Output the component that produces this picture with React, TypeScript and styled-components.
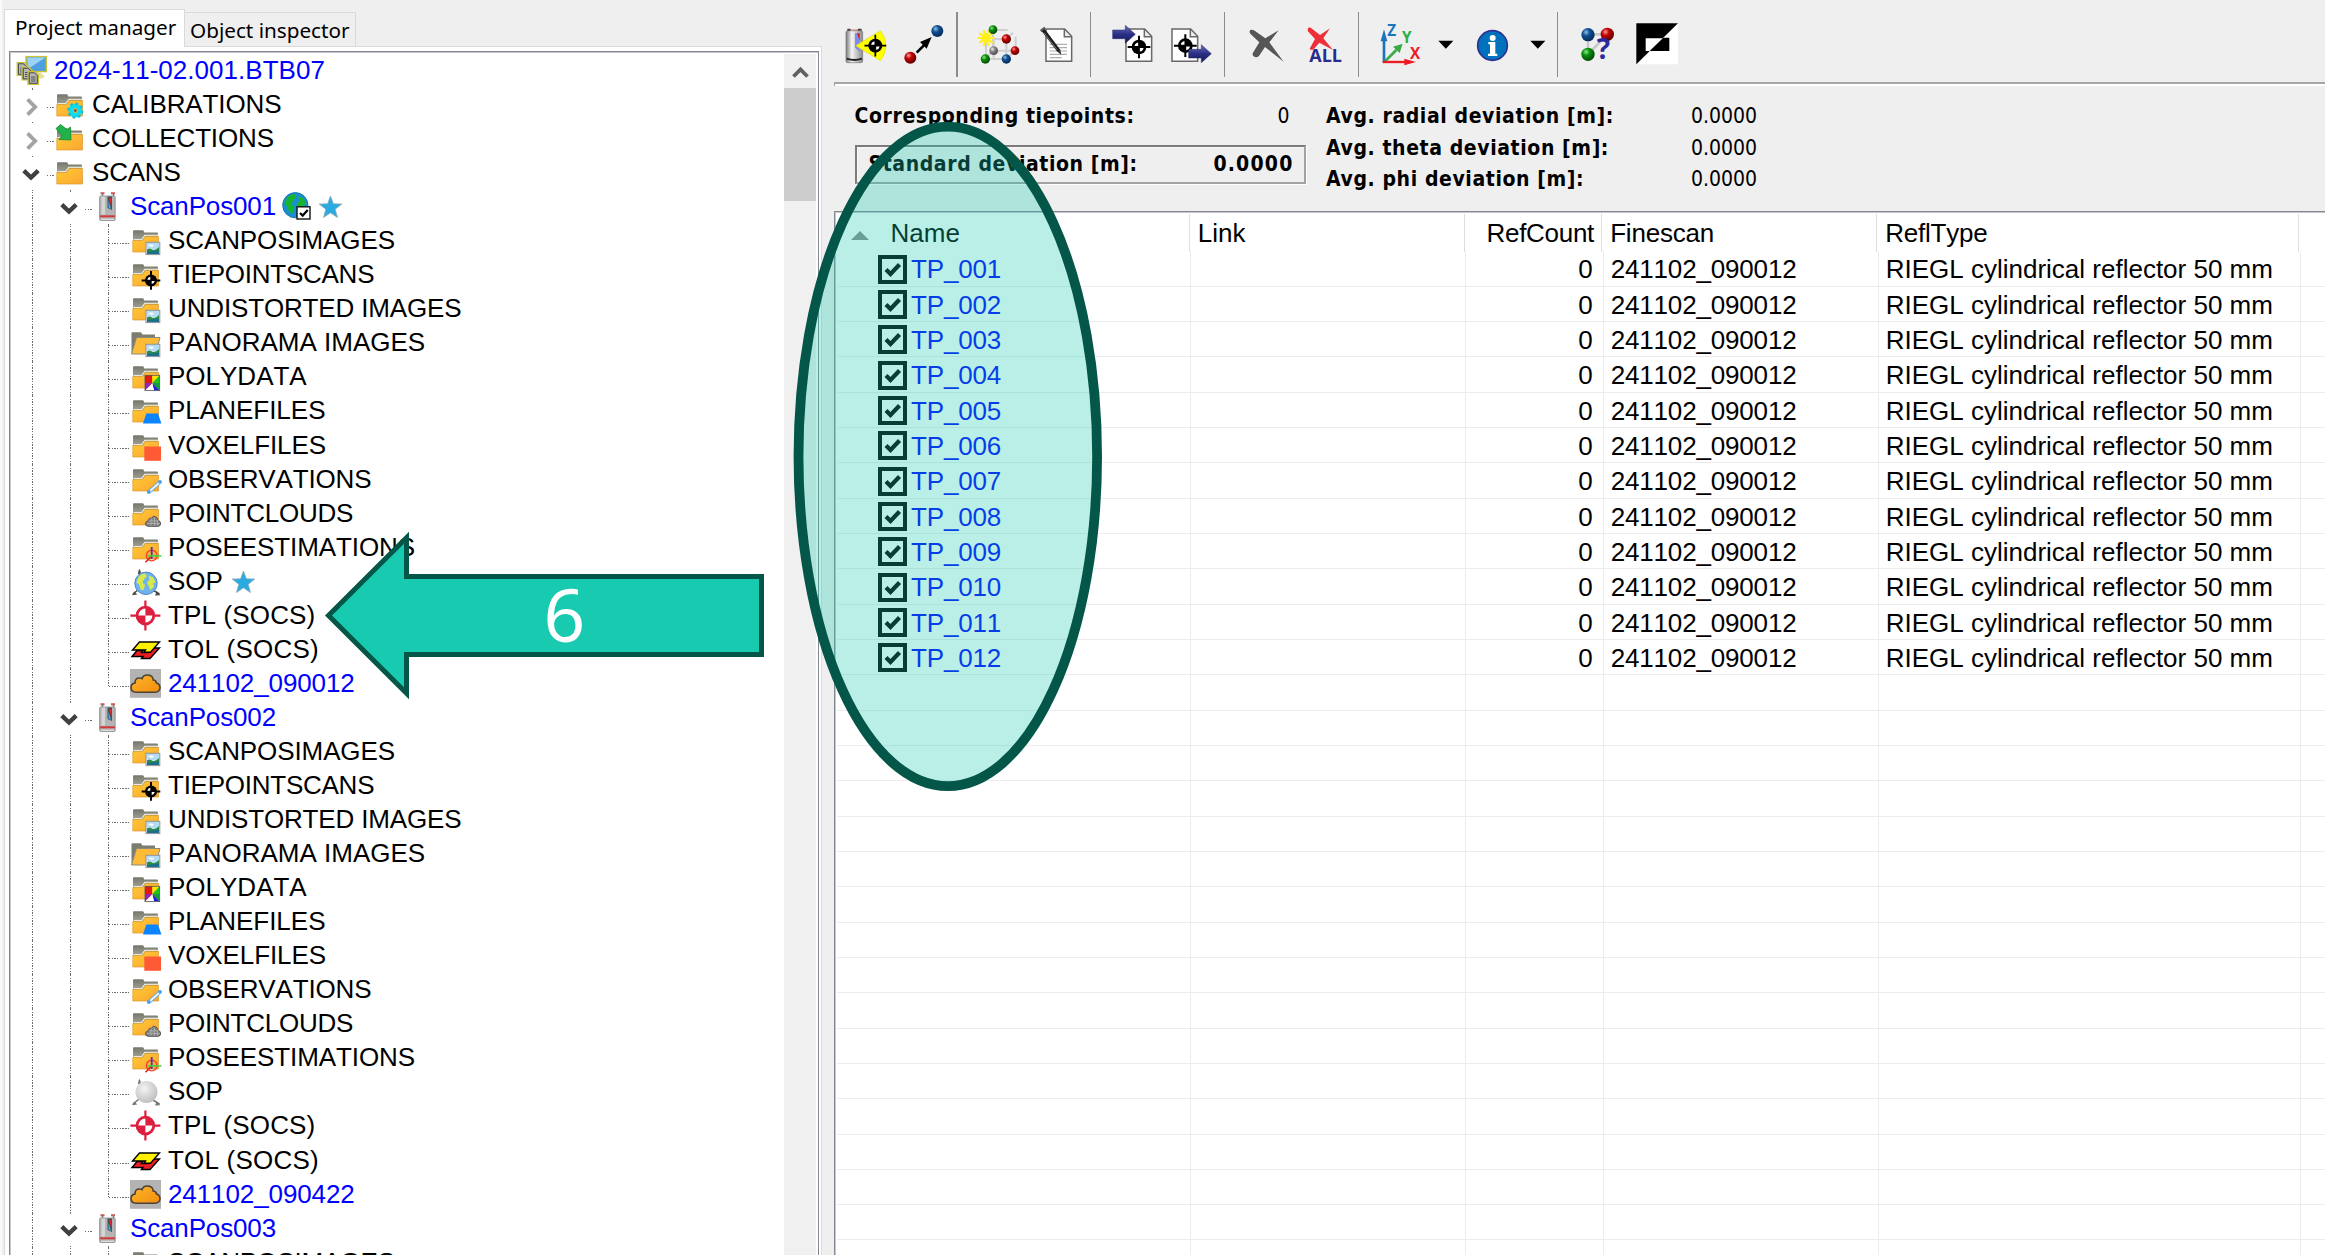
import React from "react";
import styled, { createGlobalStyle, css } from "styled-components";

const GlobalStyle = createGlobalStyle`
  * { box-sizing: border-box; }
  body { margin: 0; background: #fff; overflow: hidden; }
  svg { display: block; overflow: visible; flex: none; }
`;

const arial = css`
  font-family: "Liberation Sans", Arial, sans-serif;
  font-size: 26px;
  font-kerning: none;
  font-variant-ligatures: none;
  white-space: nowrap;
`;

/* ---------- window ---------- */

const Window = styled.div`
  position: relative;
  display: grid;
  grid-template-columns: 822px minmax(0, 1fr);
  height: 1255px;
  background: #efefef;
  overflow: hidden;
  color: #000;
`;

const LeftPane = styled.div`
  display: flex;
  flex-direction: column;
  min-height: 0;
  border-left: 2px solid #fafafa;
  padding-left: 2px;
`;

const TabBar = styled.div`
  display: flex;
  align-items: flex-end;
  height: 47px;
  flex: none;
  position: relative;
  z-index: 1;
`;

const Tab = styled.div<{ $active?: boolean }>`
  height: ${(p) => (p.$active ? 38 : 34)}px;
  width: ${(p) => (p.$active ? 181 : 171)}px;
  margin-bottom: ${(p) => (p.$active ? 0 : 1)}px;
  padding-left: ${(p) => (p.$active ? 10 : 5)}px;
  border: 1px solid #dadada;
  border-bottom: none;
  border-left-width: ${(p) => (p.$active ? 1 : 0)}px;
  background: ${(p) => (p.$active ? "#fff" : "#efefef")};
  font: 20.7px/35px "Noto Sans", "DejaVu Sans Condensed", sans-serif;
  white-space: nowrap;
`;

const TabPage = styled.div`
  flex: 1;
  min-height: 0;
  margin-top: -1px;
  border: 1px solid #dadada;
  border-bottom: none;
  background: #fff;
  padding: 4px 2px 0 4px;
  display: flex;
`;

const TreeFrame = styled.div`
  flex: 1;
  min-width: 0;
  display: flex;
  border: 1px solid #828790;
  border-bottom: none;
  box-shadow: inset 1px 1px 0 #c6c8cc;
  padding: 2px 2px 0 0;
  overflow: hidden;
`;

const TreeBody = styled.div`
  flex: 1;
  padding: 2px 0 0 6px;
  overflow: hidden;
`;

const ScrollTrack = styled.div`
  width: 32px;
  background: #f0f0f0;
`;

const ScrollArrow = styled.div`
  height: 34px;
  display: flex;
  align-items: center;
  justify-content: center;
  padding-top: 3px;
`;

const ScrollThumb = styled.div`
  height: 113px;
  background: #cdcdcd;
`;

/* ---------- tree ---------- */

const TreeRow = styled.div`
  display: flex;
  height: 34.05px;
`;

const dots = "#6c6c6c";

const GuideCell = styled.div<{ $line?: "full" | "half" | "stub" }>`
  width: 38px;
  flex: none;
  display: flex;
  background-repeat: no-repeat;
  ${(p) =>
    p.$line &&
    css`
      background-image: repeating-linear-gradient(to bottom, ${dots} 0 1.4px, transparent 1.4px 2.7px);
      background-size: 1px ${p.$line === "full" ? "100%" : p.$line === "half" ? "17px" : "2px"};
      background-position: 16px ${p.$line === "stub" ? "32px" : "0"};
    `}
`;

const Connector = styled.div<{ $from: number }>`
  height: 1px;
  width: ${(p) => 38 - p.$from}px;
  margin: 17px 0 0 ${(p) => p.$from}px;
  background: repeating-linear-gradient(to right, ${dots} 0 1.4px, transparent 1.4px 2.7px);
`;

const ExpanderSlot = styled.div`
  width: 31px;
  flex: none;
  & + div { margin-left: 0; width: 7px; }
`;

const IconSlot = styled.div<{ $stub?: boolean }>`
  width: 38px;
  flex: none;
  background-repeat: no-repeat;
  ${(p) =>
    p.$stub &&
    css`
      background-image: linear-gradient(${dots}, ${dots});
      background-size: 1px 2px;
      background-position: 16px 32px;
    `}
`;

const TreeLabel = styled.span<{ $link?: boolean; $track: number }>`
  ${arial}
  line-height: 29px;
  letter-spacing: ${(p) => p.$track}px;
  color: ${(p) => (p.$link ? "#0000ff" : "#000")};
`;

const Badge = styled.span<{ $gap: number }>`
  margin-left: ${(p) => p.$gap}px;
`;

const Chevron = ({ open }: { open: boolean }) => (
  <svg width="31" height="34" fill="none">
    {open ? (
      <path d="M7.8 12.6 15 19.5 22.2 12.6" stroke="#404040" strokeWidth="4.4" />
    ) : (
      <path d="M11.6 9.4 19.2 17 11.6 24.6" stroke="#a3a3a3" strokeWidth="3.8" />
    )}
  </svg>
);

const Folder = ({ children }: { children?: React.ReactNode }) => (
  <svg width="31" height="34">
    <defs>
      <linearGradient id="fy" x1="0" y1="0" x2="1" y2="1">
        <stop offset="0" stopColor="#ffcb30" />
        <stop offset="1" stopColor="#fba534" />
      </linearGradient>
      <linearGradient id="fg" x1="0" y1="0" x2="0" y2="1">
        <stop offset="0" stopColor="#75766b" />
        <stop offset="1" stopColor="#a5a698" />
      </linearGradient>
    </defs>
    <path d="M3 15V5.2q0-1 1-1h8.5q1 0 1.300 1l.4 1.200H27q1 0 1 1V14Z" fill="url(#fg)" />
    <path d="M3.6 13.600h8.200l3-4.200h13.400" stroke="#e9e9dc" strokeWidth="1.200" fill="none" />
    <path d="M2.800 14.600h9.600l3-4.200h13.100v15.600H2.800Z" fill="url(#fy)" stroke="#d99a2e" strokeWidth=".7" />
    {children}
  </svg>
);

const PictureBadge = () => (
  <g>
    <rect x="16" y="16.300" width="13.800" height="12.300" fill="#e6f1f8" stroke="#8a9298" strokeWidth="1" />
    <path d="M17 17h12v5l-5 1.500-7-2z" fill="#b4dcf5" />
    <path d="M18 19.500q3-2 6 0l-2 1.500z" fill="#fff" />
    <path d="M17 23.500q2-2 5 0t7-2.500v7H17Z" fill="#2b8a4a" />
    <path d="M17 26l12-1.500v3.500H17Z" fill="#1a6f8a" />
  </g>
);

const Target = ({ x, y, r, k = 1 }: { x: number; y: number; r: number; k?: number }) => (
  <g transform={`translate(${x} ${y})`}>
    <path d={`M0 ${-r * 1.55}V${r * 1.55}M${-r * 1.55} 0H${r * 1.55}`} stroke="#000" strokeWidth={2 * k} />
    <circle r={r} fill="#000" />
    <path d={`M${-r * 0.12} ${-r * 0.12}V${-r * 0.62}A${r * 0.62} ${r * 0.62} 0 0 0 ${-r * 0.62} ${-r * 0.12}ZM${r * 0.12} ${r * 0.12}V${r * 0.62}A${r * 0.62} ${r * 0.62} 0 0 0 ${r * 0.62} ${r * 0.12}Z`} fill="#fff" />
  </g>
);

const starPath = "M11.500 .5 14.400 8.300 22.800 8.600 16.200 13.800 18.500 22 11.500 17.300 4.500 22 6.800 13.800 .2 8.600 8.600 8.300Z";
const Star = () => (
  <svg width="23" height="30">
    <path d={starPath} transform="translate(0 3.500)" fill="#29abe2" stroke="#8fa9b5" strokeWidth=".8" />
  </svg>
);

const Land = () => (
  <path d="M-9-6Q-6-11-1-11L1-8-2-5-4-1-1 2-3 8-6 7-8 1-11-1ZM3-9 8-7 11-1 8 0 9 4 5 8 3 3 1-1 4-4Z" />
);

const GlobeCheck = () => (
  <svg width="29" height="34">
    <g transform="translate(13.300 13.200)">
      <circle r="12.600" fill="#1c8fd0" stroke="#1476ad" />
      <g fill="#17b52c"><Land /></g>
    </g>
    <rect x="15" y="14.800" width="13" height="12.200" fill="#fff" stroke="#111" strokeWidth="1.400" />
    <path d="M18 21l2.700 2.600 5-5.600" stroke="#000" strokeWidth="2.200" fill="none" />
  </svg>
);

const Scanner = () => (
  <svg width="31" height="34">
    <path d="M8.500 1.200h4M19 1.200h4" stroke="#d8504f" strokeWidth="2" />
    <path d="M10.500 1v4M21.500 1v4" stroke="#7b7b7b" strokeWidth="1.500" />
    <rect x="7.600" y="4" width="15.600" height="24.500" rx="1.200" fill="#b4b4b4" stroke="#8a8a8a" strokeWidth=".8" />
    <rect x="9.500" y="4.500" width="3.500" height="18" fill="#d5d5d5" />
    <path d="M15.500 4.500h4.500v13.500l-4.500-2Z" fill="#474b55" />
    <path d="M17 6h2.500v9Z" fill="#e02828" />
    <path d="M16.500 8v7.500l2.500 1.500Z" fill="#3cb1ee" />
    <path d="M8 24.300h15" stroke="#cf3a3a" strokeWidth="2" />
    <path d="M9 27.300h13" stroke="#e9e9e9" strokeWidth="1" />
  </svg>
);

const tripod = (
  <g>
    <path d="M9.500 3 10 12M3 27l8-6.500M29.500 27 22 22.500" stroke="#4a4a4a" strokeWidth="1.500" />
    <path d="M9.300 1.500 7.800 7h3.400ZM2 28.200l5.300-.8-3-2.800ZM30.500 28.200l-5.500.2 1.600-3.500Z" fill="#4a4a4a" />
  </g>
);

const CloudIcon = () => (
  <svg width="31" height="34">
    <defs>
      <linearGradient id="oc" x1="0" y1="0" x2="1" y2="1">
        <stop offset="0" stopColor="#fdb62e" />
        <stop offset="1" stopColor="#f28d0c" />
      </linearGradient>
    </defs>
    <rect width="31" height="28.800" fill="#b3b3b3" />
    <path d="M6 23.300Q1 23 1 18.500 1.200 14.500 5 14 5 8.500 10 9 11.500 9 12 9.600 13.500 5.500 18 6 23 6.500 23.200 11 26 11 26.500 14 30 15 30 19 29.500 23 25 23.300Z" fill="url(#oc)" stroke="#4a4236" strokeWidth="1.600" />
  </svg>
);

const icons: Record<string, React.ReactNode> = {
  project: (
    <svg width="31" height="34">
      <rect x="10" y=".6" width="20.400" height="15" fill="#4d9fdf" stroke="#c9c234" strokeWidth="1.400" />
      <path d="M11 1.500h18.500L12 13Z" fill="#9bd2f5" />
      <path d="M19 16h5l5 5-5 2Z" fill="#e6e09a" />
      {[[1.2, 6.5], [6, 11], [12, 15.5]].map(([x, y]) => (
        <g key={x} transform={`translate(${x} ${y})`}>
          <path d="M0 0h7l3.500 3.500v9.500H0Z" fill="#a9a9a5" stroke="#c9c234" strokeWidth="1.200" />
          <path d="M1.300 1.300h5l3 3v7.500h-8Z" fill="#b8b8b6" stroke="#4d4d4d" strokeWidth="1" />
          <path d="M3 5.500h4.500M3 7.500h4.500M3 9.500h4.500" stroke="#444" strokeWidth=".9" />
        </g>
      ))}
    </svg>
  ),
  calib: (
    <Folder>
      <g transform="translate(21.300 20.600)">
        <circle r="4.600" fill="none" stroke="#10dcec" strokeWidth="4.400" />
        <circle r="7" fill="none" stroke="#11bcd6" strokeWidth="2.200" strokeDasharray="2.700 2.790" />
        <circle r="1.400" fill="#555" />
      </g>
    </Folder>
  ),
  collect: (
    <Folder>
      <path d="M2 4.500 6.500.5 13 5.500 16.500 3 17 16 5 15.500 8 12Z" fill="#22b24a" stroke="#148a35" strokeWidth=".8" />
    </Folder>
  ),
  folder: <Folder />,
  scanner: <Scanner />,
  image: <Folder><PictureBadge /></Folder>,
  panorama: (
    <svg width="31" height="34">
      <path d="M1.500 25V5.200q0-1 1-1H11l1.500 2.200H25v6H7Z" fill="#7c7d70" />
      <path d="M6.500 9.500H30L25.500 26H1.500Z" fill="#fdbb38" stroke="#8b8b7c" strokeWidth="1" />
      <PictureBadge />
    </svg>
  ),
  tie: <Folder><Target x={21} y={20.400} r={6} /></Folder>,
  poly: (
    <Folder>
      <path d="M22.300 21V13.300H15V21Z" fill="#e01818" />
      <path d="M22.300 21 29.700 13.300H22.300Z" fill="#ffe500" />
      <path d="M22.300 21 29.700 13.300V21Z" fill="#1fc21f" />
      <path d="M22.300 21H29.700V28.600Z" fill="#0fa03a" />
      <path d="M22.300 21 29.700 28.600H24Z" fill="#2020d8" />
      <path d="M22.300 21 24 28.600H15Z" fill="#fff" />
      <path d="M22.300 21H15V28.600Z" fill="#9a1fb4" />
      <rect x="15" y="13.300" width="14.700" height="15.300" fill="none" stroke="#555" strokeWidth=".8" />
    </Folder>
  ),
  plane: <Folder><path d="M16.300 17.500h11.700L31.400 27.500H13Z" fill="#0a84ff" /></Folder>,
  voxel: <Folder><rect x="14.300" y="15.500" width="16.700" height="14.300" fill="#ff5a36" /></Folder>,
  obs: (
    <Folder>
      <path d="M19 27 30 17" stroke="#4aa3e6" strokeWidth="3.600" />
      <path d="M19 27 30 17" stroke="#f2f8ff" strokeWidth="2" />
      <circle cx="18.800" cy="27" r="1.900" fill="#4aa3e6" />
      <circle cx="30" cy="16.800" r="1.900" fill="#4aa3e6" />
    </Folder>
  ),
  points: (
    <Folder>
      <path d="M18 27.300Q15 27 15.600 24 16 21.800 18.300 22 18.500 18.500 21.500 19 23.500 16 26 18 28 19 27.700 21.500 30.800 21.500 30.600 25 30.300 27.300 28 27.300Z" fill="#858585" stroke="#555" strokeWidth="1" />
      <path d="M17 24.500h13M18.500 21.800h10M21 19v8M24.500 18v9M27.500 21v6" stroke="#c4c4c4" strokeWidth=".5" />
    </Folder>
  ),
  pose: (
    <Folder>
      <circle cx="21.700" cy="22.600" r="5.300" fill="none" stroke="#f0452c" strokeWidth="1.400" />
      <path d="M21.700 22.900 15.500 29.300" stroke="#e52323" strokeWidth="1.600" />
      <path d="M21.700 14v12" stroke="#4a35b4" strokeWidth="1.800" />
      <path d="M17 22.900h14.500" stroke="#36d84a" strokeWidth="1.500" />
    </Folder>
  ),
  sop: (
    <svg width="31" height="34">
      {tripod}
      <g transform="translate(16 16.300)">
        <circle r="11.200" fill="#6fb3ee" stroke="#4b86c8" strokeWidth="1" />
        <g fill="#d9e84a" transform="scale(.88)"><Land /></g>
      </g>
    </svg>
  ),
  sopGray: (
    <svg width="31" height="34">
      <defs>
        <radialGradient id="gs" cx=".4" cy=".35" r=".7">
          <stop offset="0" stopColor="#f4f4f4" />
          <stop offset="1" stopColor="#bcbcbc" />
        </radialGradient>
      </defs>
      <g opacity=".75">{tripod}</g>
      <circle cx="16.500" cy="15" r="11" fill="url(#gs)" />
    </svg>
  ),
  tpl: (
    <svg width="31" height="34">
      <path d="M15.400-.5v30M.4 14.600h30" stroke="#dc1f3e" strokeWidth="2.200" />
      <circle cx="15.400" cy="14.600" r="8.400" fill="#fff" stroke="#dc1f3e" strokeWidth="2.800" />
      <path d="M15.400 14.600V6.500A8 8 0 0 1 23.400 14.600ZM15.400 14.600V22.600A8 8 0 0 1 7.400 14.600Z" fill="#dc1f3e" />
    </svg>
  ),
  tol: (
    <svg width="31" height="34">
      <path d="M7 15.500H13L11.500 17.500H18L22 13H29.500L20 23.500H11.500L13 21.500H2Z" fill="#ee1c25" stroke="#000" strokeWidth="1.400" />
      <path d="M9.500 7H29.500L20.500 17.300H14L15.500 15H2.500Z" fill="#fff200" stroke="#000" strokeWidth="1.400" />
    </svg>
  ),
  cloud: <CloudIcon />,
};

type Line = "full" | "half" | "stub" | undefined;

interface Node {
  label: string;
  icon: string;
  link?: boolean;
  open?: boolean;
  track?: number;
  badges?: React.ReactNode;
  children?: Node[];
}

const scanChildren = (sopIcon: string, scan: string, star?: boolean): Node[] => [
  { label: "SCANPOSIMAGES", icon: "image" },
  { label: "TIEPOINTSCANS", icon: "tie", track: -0.25 },
  { label: "UNDISTORTED IMAGES", icon: "image", track: -0.15 },
  { label: "PANORAMA IMAGES", icon: "panorama", track: 0 },
  { label: "POLYDATA", icon: "poly", track: 0 },
  { label: "PLANEFILES", icon: "plane", track: 0 },
  { label: "VOXELFILES", icon: "voxel", track: -0.1 },
  { label: "OBSERVATIONS", icon: "obs", track: -0.15 },
  { label: "POINTCLOUDS", icon: "points", track: -0.25 },
  { label: "POSEESTIMATIONS", icon: "pose" },
  { label: "SOP", icon: sopIcon, track: 0, badges: star && <Badge $gap={9}><Star /></Badge> },
  { label: "TPL (SOCS)", icon: "tpl", track: 0.15 },
  { label: "TOL (SOCS)", icon: "tol", track: 0.2 },
  { label: scan, icon: "cloud", link: true },
];

const tree: Node = {
  label: "2024-11-02.001.BTB07",
  icon: "project",
  link: true,
  open: true,
  track: 0.03,
  children: [
    { label: "CALIBRATIONS", icon: "calib", children: [] },
    { label: "COLLECTIONS", icon: "collect", track: -0.15, children: [] },
    {
      label: "SCANS",
      icon: "folder",
      open: true,
      track: -0.2,
      children: [
        {
          label: "ScanPos001",
          icon: "scanner",
          link: true,
          open: true,
          track: -0.15,
          badges: (
            <>
              <Badge $gap={6}><GlobeCheck /></Badge>
              <Badge $gap={8}><Star /></Badge>
            </>
          ),
          children: scanChildren("sop", "241102_090012", true),
        },
        { label: "ScanPos002", icon: "scanner", link: true, open: true, track: -0.15, children: scanChildren("sopGray", "241102_090422") },
        { label: "ScanPos003", icon: "scanner", link: true, open: true, track: -0.15, children: [{ label: "SCANPOSIMAGES", icon: "image" }] },
      ],
    },
  ],
};

const TreeItem = ({ node, depth, last }: { node: Node; depth: number; last: boolean }) => {
  const expandable = !!node.children;
  const line: Line = expandable ? "stub" : last ? "half" : "full";
  return (
    <>
      <TreeRow>
        {Array.from({ length: Math.max(0, depth - 1) }, (_, i) => (
          <GuideCell key={i} $line="full" />
        ))}
        {depth > 0 && (
          <GuideCell $line={line}>
            {expandable ? (
              <>
                <ExpanderSlot><Chevron open={!!node.open} /></ExpanderSlot>
                <Connector $from={31} />
              </>
            ) : (
              <Connector $from={17} />
            )}
          </GuideCell>
        )}
        <IconSlot $stub={!!node.open}>{icons[node.icon]}</IconSlot>
        <TreeLabel $link={node.link} $track={node.track ?? -0.1}>{node.label}</TreeLabel>
        {node.badges}
      </TreeRow>
      {node.open &&
        node.children!.map((c, i) => (
          <TreeItem key={c.label + i} node={c} depth={depth + 1} last={depth === 2 && i === 13} />
        ))}
    </>
  );
};

/* ---------- right pane ---------- */

const RightPane = styled.div`
  display: flex;
  flex-direction: column;
  min-width: 0;
  min-height: 0;
  padding-left: 12px;
`;

const Toolbar = styled.div`
  display: flex;
  height: 82px;
  flex: none;
  padding-left: 0.7px;
`;

const ToolButton = styled.div<{ $w?: number }>`
  width: ${(p) => p.$w ?? 58.67}px;
  flex: none;
`;

const ToolSeparator = styled.div<{ $w?: number }>`
  width: ${(p) => p.$w ?? 16.66}px;
  flex: none;
  padding: 12px 0 5px 4px;
  &::before {
    content: "";
    display: block;
    width: 1.500px;
    height: 100%;
    background: #8c8c8c;
  }
`;

const Groove = styled.div`
  flex: none;
  height: 4px;
  border-top: 2px solid #a5a5a5;
  border-left: 1px solid #a5a5a5;
  background: #fff;
`;

/* Toolbar drawings share one strip coordinate system with three units per pixel. */
const Tool = ({ x, w = 58.67, children }: { x: number; w?: number; children: React.ReactNode }) => (
  <ToolButton $w={w}>
    <svg width={w} height="82" viewBox={`${x} 0 ${w * 3} 246`}>{children}</svg>
  </ToolButton>
);

const ballColors: Record<string, [string, string, string]> = {
  red: ["#ff9a9a", "#c00000", "#5c0000"],
  blue: ["#8fc1ea", "#0f4f91", "#052a55"],
  green: ["#8ee88e", "#0a8f0a", "#034503"],
  gray: ["#f0f0f0", "#8a8a8a", "#454545"],
};

const Ball = ({ x, y, r, c }: { x: number; y: number; r: number; c: string }) => (
  <circle cx={x} cy={y} r={r} fill={`url(#ball-${c})`} />
);

const BallDefs = () => (
  <defs>
    {Object.entries(ballColors).map(([k, [a, b, d]]) => (
      <radialGradient key={k} id={`ball-${k}`} cx=".36" cy=".32" r=".72">
        <stop offset="0" stopColor={a} />
        <stop offset=".38" stopColor={b} />
        <stop offset="1" stopColor={d} />
      </radialGradient>
    ))}
    <linearGradient id="navy" x1="0" y1="0" x2="0" y2="1">
      <stop offset="0" stopColor="#6a6fb8" />
      <stop offset=".5" stopColor="#2a2f86" />
      <stop offset="1" stopColor="#15184f" />
    </linearGradient>
    <linearGradient id="steel" x1="0" y1="0" x2="1" y2="0">
      <stop offset="0" stopColor="#777" />
      <stop offset=".35" stopColor="#f6f6f6" />
      <stop offset="1" stopColor="#8a8a8a" />
    </linearGradient>
  </defs>
);

const Page = ({ x }: { x: number }) => (
  <path d={`M${x} 87h56l21 22v75h-77ZM${x + 55} 88v22h21`} fill="#fff" stroke="#686868" strokeWidth="4.500" />
);

const BlueArrow = ({ x, y }: { x: number; y: number }) => (
  <path d={`M${x} ${y - 13}h38v-14l30 27-30 27v-14h-38Z`} fill="url(#navy)" stroke="#20246e" strokeWidth="1.500" />
);

const sun = Array.from({ length: 10 }, (_, i) => {
  const a = (i * Math.PI) / 5;
  return `M497 114L${(497 + 25 * Math.cos(a)).toFixed(1)} ${(114 + 25 * Math.sin(a)).toFixed(1)}`;
}).join("");

const Letter = styled.text<{ $size: number }>`
  font: bold ${(p) => p.$size}px "Open Sans", "Noto Sans", sans-serif;
`;

const tahoma = css`
  font-family: "DejaVu Sans Condensed", "DejaVu Sans", "Noto Sans", sans-serif;
  font-stretch: condensed;
  font-size: 21px;
  line-height: 31.500px;
  white-space: nowrap;
`;

const Stats = styled.div`
  display: flex;
  height: 125px;
  flex: none;
  padding: 15px 0 0 20.500px;
`;

const StatColumn = styled.div<{ $w: number }>`
  width: ${(p) => p.$w}px;
  margin-right: 21.500px;
`;

const StatRow = styled.div<{ $right?: number }>`
  ${tahoma}
  display: flex;
  justify-content: space-between;
  padding-right: ${(p) => p.$right ?? 0}px;
`;

const StatLabel = styled.span`
  font-weight: 700;
  letter-spacing: 0.6px;
`;

const StatStrong = styled.span`
  font-weight: 700;
  letter-spacing: 1.200px;
`;

const SunkenBox = styled(StatRow)`
  margin-top: 12px;
  width: 451px;
  height: 39px;
  align-items: center;
  padding: 2px 10px 0 12px;
  border: 2px solid #8a8a8a;
  border-color: #7b7b7b #a2a2a2 #a2a2a2 #7b7b7b;
  box-shadow: 1px 1px 0 #fff, inset 1px 1px 0 #f8f8f8;
`;

const Table = styled.div`
  flex: 1;
  min-height: 0;
  border-top: 1px solid #828790;
  border-left: 1px solid #828790;
  box-shadow: inset 1px 1px 0 #c6c8cc;
  background: #fff;
  padding-top: 2px;
  overflow: hidden;
`;

const HeaderRow = styled.div`
  display: grid;
  grid-template-columns: 354.500px 275px 137.500px 275px 422px 1fr;
  height: 37.300px;
`;

const DataRow = styled.div`
  display: grid;
  grid-template-columns: 356px 275.200px 137.500px 275px 422px 1fr;
  height: 35.330px;
  margin-left: 2px;
  border-bottom: 1px solid #ececec;
  & > * { margin-left: -2px; margin-right: 2px; }
`;

const HeaderCell = styled.div<{ $pad?: number; $right?: boolean; $track?: number }>`
  ${arial}
  display: flex;
  justify-content: ${(p) => (p.$right ? "flex-end" : "flex-start")};
  line-height: 38px;
  letter-spacing: ${(p) => p.$track ?? 0}px;
  padding: 0 7px 0 ${(p) => p.$pad ?? 8.200}px;
  border-right: 1px solid #dedede;
`;

const DataCell = styled.div<{ $pad?: number; $right?: boolean; $link?: boolean; $track?: number }>`
  ${arial}
  display: flex;
  justify-content: ${(p) => (p.$right ? "flex-end" : "flex-start")};
  line-height: 37.500px;
  letter-spacing: ${(p) => p.$track ?? 0}px;
  padding: 0 10px 0 ${(p) => p.$pad ?? 7}px;
  border-right: 1px solid #ececec;
  color: ${(p) => (p.$link ? "#0000ff" : "#000")};
`;

const SortMark = styled.span`
  margin: 17px 21.500px 0 0;
`;

const CheckSlot = styled.span`
  margin: 3.300px 4.500px 0 0;
`;

const Check = () => (
  <CheckSlot>
    <svg width="29" height="29">
      <rect x="2" y="2" width="25" height="25" fill="#fff" stroke="#000" strokeWidth="4" />
      <path d="M8 14.500l4.500 4.500 9-9.500" stroke="#000" strokeWidth="4.200" fill="none" />
    </svg>
  </CheckSlot>
);

/* ---------- annotations over the window ---------- */

const Annotations = styled.svg`
  position: absolute;
  left: 0;
  top: 0;
`;

const StepNumber = styled.text`
  font: 73px "Noto Sans", sans-serif;
  fill: #fff;
`;

const rows = Array.from({ length: 29 }, (_, i) => i);

export default function App() {
  return (
    <>
      <GlobalStyle />
      <Window>
        <LeftPane>
          <TabBar>
            <Tab $active>Project manager</Tab>
            <Tab>Object inspector</Tab>
          </TabBar>
          <TabPage>
            <TreeFrame>
              <TreeBody>
                <TreeItem node={tree} depth={0} last />
              </TreeBody>
              <ScrollTrack>
                <ScrollArrow>
                  <svg width="15" height="13" fill="none">
                    <path d="M.5 10.500 7.500 3.500 14.500 10.500" stroke="#606060" strokeWidth="3.800" />
                  </svg>
                </ScrollArrow>
                <ScrollThumb />
              </ScrollTrack>
            </TreeFrame>
          </TabPage>
        </LeftPane>

        <RightPane>
          <Toolbar>
            <Tool x={44}>
              <BallDefs />
              <rect x="77" y="92" width="50" height="96" rx="5" fill="url(#steel)" stroke="#777" strokeWidth="2" />
              <path d="M81 89h10M112 89h12" stroke="#444" strokeWidth="6" />
              <path d="M93 90h18" stroke="#d77" strokeWidth="3" />
              <path d="M104 100h14v55l-14-12Z" fill="#7c8cf0" />
              <path d="M110 100h8v22Z" fill="#c22" />
              <path d="M79 176q23 8 46 0" stroke="#222" strokeWidth="6" fill="none" />
              <path d="M106 137 180 92Q197 112 197 137T180 182Z" fill="#ffff00" stroke="#d8d000" strokeWidth="1.500" />
              <Target x={165} y={137} r={21} k={2.600} />
            </Tool>
            <Tool x={220}>
              <path d="M291 158 318 131" stroke="#000" strokeWidth="8" />
              <path d="M336 111 301 126 321 146Z" fill="#000" />
              <Ball x={272} y={173} r={18} c="red" />
              <Ball x={353} y={93} r={18} c="blue" />
            </Tool>
            <ToolSeparator />
            <Tool x={446}>
              <path d="M518 90H562M578 98 558 117M586 110V150M497 120V177H558V117H520V177M520 152H584L558 177M518 90V152L495 177" stroke="#cfcfcf" strokeWidth="6" fill="none" />
              <path d={sun} stroke="#ffef1c" strokeWidth="6" />
              <circle cx="497" cy="114" r="14" fill="#ffef1c" />
              <Ball x={518} y={89} r={13} c="green" />
              <Ball x={558} y={117} r={14} c="red" />
              <Ball x={584} y={152} r={13} c="red" />
              <Ball x={520} y={152} r={13} c="gray" />
              <Ball x={495} y={177} r={14} c="green" />
              <Ball x={558} y={177} r={14} c="blue" />
            </Tool>
            <Tool x={622}>
              <Page x={679} />
              <path d="M690 133h52M690 143h52M690 153h52M690 163h52M690 173h36" stroke="#b0b0b0" strokeWidth="3.500" />
              <path d="M669 88 718 153" stroke="#1c1c1c" strokeWidth="11" />
              <path d="M673 98 712 149" stroke="#8c8c8c" strokeWidth="2.500" />
              <path d="M712 154 725 165 722 149Z" fill="#333" />
              <path d="M663 93 676 83" stroke="#555" strokeWidth="7" />
            </Tool>
            <ToolSeparator />
            <Tool x={848}>
              <Page x={917} />
              <Target x={956} y={141} r={22} k={3} />
              <BlueArrow x={877} y={103} />
            </Tool>
            <Tool x={1024}>
              <Page x={1057} />
              <Target x={1097} y={137} r={22} k={3} />
              <BlueArrow x={1107} y={161} />
            </Tool>
            <ToolSeparator />
            <Tool x={20}>
              <path d="M60 90Q66 87 73 92L105 115 145 91 117 127 160 185 104 141 86 168Q78 176 69 168 65 164 68 158L87 127 60 101Q56 95 60 90Z" fill="#565656" />
            </Tool>
            <Tool x={196}>
              <path d="M235 84Q241 80 247 86L271 105 301 85 281 115 310 150 269 128 252 148Q244 152 240 146L256 117 234 93Z" fill="#ee2e38" />
              <Letter x="239" y="186" $size={53} fill="#2a2a8c" textLength="98" lengthAdjust="spacingAndGlyphs">ALL</Letter>
            </Tool>
            <ToolSeparator />
            <Tool x={422}>
              <path d="M461 188V112" stroke="#1b75bc" strokeWidth="8" />
              <path d="M461 88 451 124H471Z" fill="#1b75bc" />
              <path d="M464 184 498 150" stroke="#39a845" strokeWidth="8" />
              <path d="M517 131 508 159 488 140Z" fill="#39a845" />
              <path d="M457 186H530" stroke="#ed1c24" strokeWidth="7" />
              <path d="M557 186 522 176V196Z" fill="#ed1c24" />
              <Letter x="471" y="108" $size={46} fill="#1b75bc">Z</Letter>
              <Letter x="515" y="130" $size={46} fill="#2fae48">Y</Letter>
              <Letter x="539" y="176" $size={46} fill="#ed1c24">X</Letter>
            </Tool>
            <Tool x={598} w={33}>
              <path d="M626 122H671L648.500 146Z" fill="#000" />
            </Tool>
            <Tool x={697}>
              <circle cx="788.500" cy="136.500" r="44.500" fill="#0071bc" stroke="#2e3192" strokeWidth="5" />
              <circle cx="789" cy="114" r="9" fill="#fff" />
              <path d="M776 126h21v35h6v7h-28v-7h6v-28h-5Z" fill="#fff" />
            </Tool>
            <Tool x={873} w={32}>
              <path d="M901 122H946L923.500 146Z" fill="#000" />
            </Tool>
            <ToolSeparator $w={15.600} />
            <Tool x={1016}>
              <path d="M1134 103H1076V163L1134 103" stroke="#c9c9c9" strokeWidth="8" fill="none" />
              <Ball x={1076} y={104} r={20} c="blue" />
              <Ball x={1134} y={103} r={20} c="red" />
              <Ball x={1076} y={163} r={20} c="green" />
              <Letter x="1102" y="178" $size={84} fill="#2a2a9c">?</Letter>
            </Tool>
            <Tool x={1192}>
              <path d="M1220 70H1345V193H1220Z" fill="#fff" />
              <path d="M1220 70H1345L1220 193Z" fill="#000" />
              <path d="M1248 115H1301L1261 153H1248Z" fill="#fff" />
              <path d="M1301 113H1319V153H1260Z" fill="#000" />
            </Tool>
          </Toolbar>
          <Groove />

          <Stats>
            <StatColumn $w={450}>
              <StatRow $right={15}>
                <StatLabel>Corresponding tiepoints:</StatLabel>
                <span>0</span>
              </StatRow>
              <SunkenBox>
                <StatLabel>Standard deviation [m]:</StatLabel>
                <StatStrong>0.0000</StatStrong>
              </SunkenBox>
            </StatColumn>
            <StatColumn $w={431}>
              <StatRow>
                <StatLabel>Avg. radial deviation [m]:</StatLabel>
                <span>0.0000</span>
              </StatRow>
              <StatRow>
                <StatLabel>Avg. theta deviation [m]:</StatLabel>
                <span>0.0000</span>
              </StatRow>
              <StatRow>
                <StatLabel>Avg. phi deviation [m]:</StatLabel>
                <span>0.0000</span>
              </StatRow>
            </StatColumn>
          </Stats>

          <Table>
            <HeaderRow>
              <HeaderCell $pad={16}>
                <SortMark>
                  <svg width="18" height="9"><path d="M0 9 9 0 18 9Z" fill="#8c8c8c" /></svg>
                </SortMark>
                Name
              </HeaderCell>
              <HeaderCell>Link</HeaderCell>
              <HeaderCell $right $track={-0.3}>RefCount</HeaderCell>
              <HeaderCell $track={-0.2}>Finescan</HeaderCell>
              <HeaderCell $track={-0.2}>ReflType</HeaderCell>
            </HeaderRow>
            {rows.map((i) => (
              <DataRow key={i}>
                <DataCell $pad={42.500} $link $track={-0.15}>
                  {i < 12 && (
                    <>
                      <Check />
                      {`TP_${String(i + 1).padStart(3, "0")}`}
                    </>
                  )}
                </DataCell>
                <DataCell />
                <DataCell $right>{i < 12 && "0"}</DataCell>
                <DataCell $track={-0.17}>{i < 12 && "241102_090012"}</DataCell>
                <DataCell>{i < 12 && "RIEGL cylindrical reflector 50 mm"}</DataCell>
              </DataRow>
            ))}
          </Table>
        </RightPane>

        <Annotations width="2325" height="1255">
          <ellipse cx="947.800" cy="456.400" rx="149.300" ry="329.700" fill="#17cab0" fillOpacity=".3" stroke="#045648" strokeWidth="9.800" />
          <path d="M328.500 615.500 406.500 537.700V576.500H761.500V654.500H406.500V693.300Z" fill="#17cab0" stroke="#045648" strokeWidth="5" />
          <StepNumber x="564.500" y="641.500" textAnchor="middle">6</StepNumber>
        </Annotations>
      </Window>
    </>
  );
}
